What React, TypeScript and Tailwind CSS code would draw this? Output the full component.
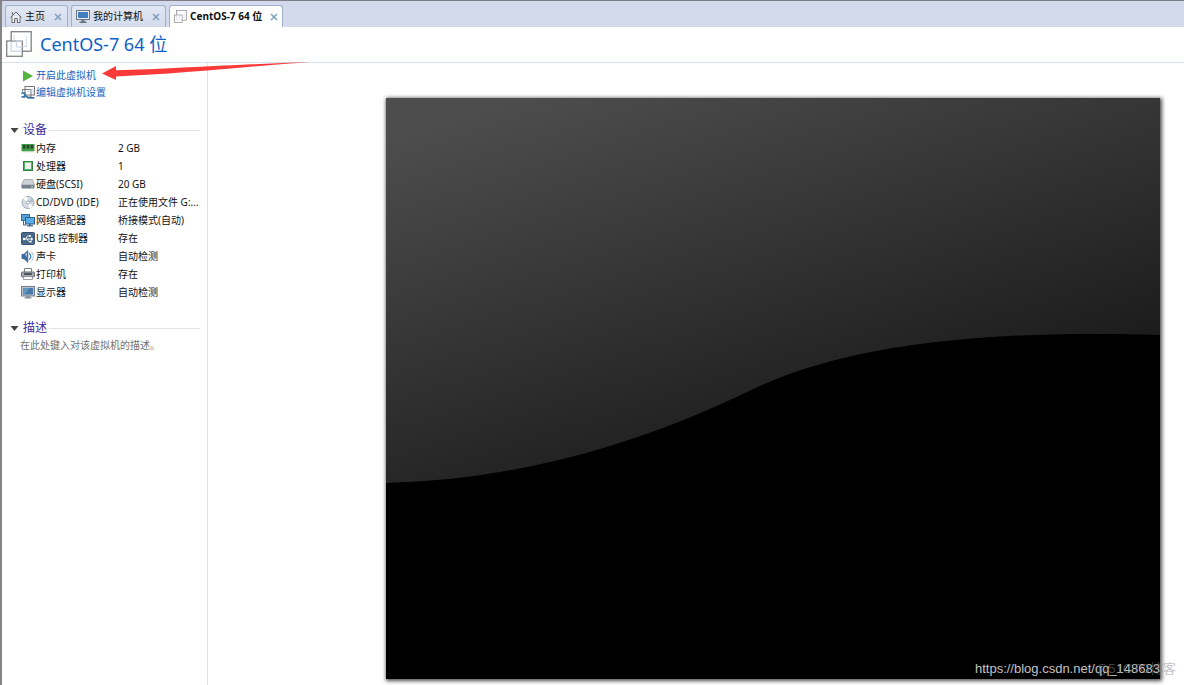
import type { ReactNode } from "react";

type IconProps = { className?: string };

const HomeIcon = () => (
  <svg width="12" height="12" viewBox="0 0 12 12" fill="none" stroke="#666" strokeWidth="1" aria-hidden="true">
    <path d="M0.5 6.5 6 0.9l5.5 5.6" />
    <path d="M2 5.4v6.1h2.6V7.4h2.8v4.1H10V5.4" fill="#f7f9fc" />
    <path d="M2.4 3.8V1.2" />
  </svg>
);

const ComputerIcon = () => (
  <svg width="14" height="13" viewBox="0 0 14 13" aria-hidden="true">
    <rect x="0.5" y="0.5" width="13" height="9" fill="#e8eef5" stroke="#6b7682" />
    <rect x="2" y="2" width="10" height="6" fill="#3f7fc0" />
    <path d="M5.5 10h3v1.5h2V13h-7v-1.5h2z" fill="#6b7682" />
  </svg>
);

const MachineIcon = ({ className }: IconProps) => (
  <svg className={className} viewBox="0 0 26 26" fill="none" stroke="#808080" strokeWidth="1.3" aria-hidden="true">
    <rect x="5.2" y="0.7" width="20" height="19.5" fill="#fff" />
    <rect x="0.7" y="10" width="15.6" height="15.3" fill="#fff" />
    <path d="M5.2 10.6v9.6h10.4M16.3 10H10.5V16" stroke="#c9d4e6" />
    <path d="M10.5 16h5M8 4v6M20.5 5v10.5h-4" stroke="#d9e1ee" />
  </svg>
);

const CloseIcon = () => (
  <svg width="8" height="8" viewBox="0 0 8 8" stroke="#7d9fc0" strokeWidth="1.5" aria-hidden="true">
    <path d="M1 1l6 6M7 1 1 7" />
  </svg>
);

const PlayIcon = () => (
  <svg width="12" height="12" viewBox="0 0 12 12" aria-hidden="true">
    <path d="M1 0.5 11 6 1 11.5z" fill="#53b63b" />
  </svg>
);

const EditIcon = () => (
  <svg width="14" height="13" viewBox="0 0 14 13" fill="none" aria-hidden="true">
    <rect x="4" y="0.5" width="9.5" height="8.5" stroke="#777" fill="#fff" />
    <path d="M1.5 5.5v-2H10V11H7" stroke="#777" />
    <path d="M6.5 5.5h3.5M12 2.5v5" stroke="#c3cfdd" />
    <path d="M0.5 7.2h3.2v3.6H0.5M4 9.2l3.2 2.6h6.3" stroke="#3b78a8" strokeWidth="1.7" />
  </svg>
);

const MemoryIcon = () => (
  <svg width="14" height="12" viewBox="0 0 14 12" aria-hidden="true">
    <rect x="0.5" y="2" width="13" height="7" fill="#3f9a45" />
    <path d="M2 3h2.4v3.5H2zM5.8 3h2.4v3.5H5.8zM9.6 3H12v3.5H9.6z" fill="#27422b" />
    <path d="M1.5 9.5h11" stroke="#7db37f" strokeWidth="1.4" strokeDasharray="1 1" />
  </svg>
);

const CpuIcon = () => (
  <svg width="14" height="12" viewBox="0 0 14 12" aria-hidden="true">
    <rect x="2.5" y="1.5" width="9" height="9" fill="#4fb463" stroke="#2f8442" />
    <rect x="4" y="2.5" width="6" height="6.5" fill="#eef2ee" />
  </svg>
);

const DiskIcon = () => (
  <svg width="14" height="12" viewBox="0 0 14 12" aria-hidden="true">
    <path d="M3 1.5h8.4L13.5 7H0.5z" fill="#cdd2d8" stroke="#9298a0" strokeWidth="0.7" />
    <rect x="0.5" y="7" width="13" height="3.5" rx="0.5" fill="#757e8b" />
    <path d="M10 8.8h2" stroke="#b5e3a4" />
  </svg>
);

const DiscIcon = () => (
  <svg width="14" height="13" viewBox="0 0 14 13" aria-hidden="true">
    <circle cx="7" cy="6.5" r="6" fill="#d4dce5" stroke="#8e9aa8" strokeWidth="0.8" />
    <path d="M7 6.5 2 2.8A6 6 0 0 1 6 .8zM7 6.5l5 3.7a6 6 0 0 1-4 2z" fill="#fff" />
    <path d="M7 6.5 13 6a6 6 0 0 0-2-4z" fill="#adbdce" />
    <circle cx="7" cy="6.5" r="1.6" fill="#fff" stroke="#8e9aa8" strokeWidth="0.8" />
  </svg>
);

const NetworkIcon = () => (
  <svg width="14" height="13" viewBox="0 0 14 13" aria-hidden="true">
    <rect x="0.5" y="0.5" width="8" height="6" fill="#58a2dc" stroke="#356b9b" />
    <path d="M2.5 7v4h3" fill="none" stroke="#3c6d96" />
    <rect x="4.5" y="3.5" width="9" height="6.5" fill="#58ace8" stroke="#2e5f90" />
    <path d="M8 10h2v1.3h2v1.2H6v-1.2h2z" fill="#44678b" />
  </svg>
);

const UsbIcon = () => (
  <svg width="14" height="13" viewBox="0 0 14 13" fill="none" stroke="#fff" aria-hidden="true">
    <rect x="0.5" y="0.5" width="13" height="12" rx="1" fill="#49698a" stroke="#39536f" />
    <path d="M2.5 7H11M4.5 7l2-3h1.7M6 7l2 2.7h1.5" strokeWidth="0.9" />
    <path d="m10 5.3 2.3 1.7L10 8.7z" fill="#fff" stroke="none" />
    <circle cx="3" cy="7" r="1.2" fill="#fff" stroke="none" />
    <path d="M8 3h1.8v1.8H8zM9 8.8h1.6v1.6H9z" fill="#fff" stroke="none" />
  </svg>
);

const SoundIcon = () => (
  <svg width="14" height="13" viewBox="0 0 14 13" fill="none" aria-hidden="true">
    <path d="M1 4.3h2L6.8 0.7v11.6L3 8.7H1z" fill="#3c6da3" stroke="#315a88" strokeWidth="0.8" />
    <path d="M4 4.5 6 2.5v5z" fill="#a9c7e4" />
    <path d="M8.3 3.3c1.6 1.8 1.6 4.6 0 6.4" stroke="#4784bb" strokeWidth="1.3" />
    <path d="M10.3 1.7c2.6 2.8 2.6 6.8 0 9.6" stroke="#a4c1da" />
  </svg>
);

const PrinterIcon = () => (
  <svg width="14" height="12" viewBox="0 0 14 12" aria-hidden="true">
    <path d="M3.5 0.5h7v4h-7z" fill="#fff" stroke="#7b7f88" />
    <rect x="0.5" y="4" width="13" height="5" rx="1" fill="#a6aab4" stroke="#666b75" />
    <path d="M3 6h8" stroke="#34383f" strokeWidth="1.5" />
    <path d="M3 8.5h8l0.7 3H2.3z" fill="#fff" stroke="#858993" strokeWidth="0.8" />
  </svg>
);

const DisplayIcon = () => (
  <svg width="14" height="13" viewBox="0 0 14 13" aria-hidden="true">
    <rect x="0.5" y="0.5" width="13" height="9.5" fill="#b8c2cc" stroke="#72808f" />
    <rect x="2" y="2" width="10" height="6.5" fill="#4778a8" />
    <path d="M2 2h7L4 8.5H2z" fill="#6495bd" />
    <path d="M5 10h4v1.3h1.5v1.2h-7v-1.2H5z" fill="#8792a0" />
  </svg>
);

const tabs = [
  { label: "主页", icon: <HomeIcon />, active: false },
  { label: "我的计算机", icon: <ComputerIcon />, active: false },
  { label: "CentOS-7 64 位", icon: <MachineIcon className="size-[13px]" />, active: true },
];

const devices = [
  { name: "内存", value: "2 GB", icon: <MemoryIcon /> },
  { name: "处理器", value: "1", icon: <CpuIcon /> },
  { name: "硬盘(SCSI)", value: "20 GB", icon: <DiskIcon /> },
  { name: "CD/DVD (IDE)", value: "正在使用文件 G:...", icon: <DiscIcon /> },
  { name: "网络适配器", value: "桥接模式(自动)", icon: <NetworkIcon /> },
  { name: "USB 控制器", value: "存在", icon: <UsbIcon /> },
  { name: "声卡", value: "自动检测", icon: <SoundIcon /> },
  { name: "打印机", value: "存在", icon: <PrinterIcon /> },
  { name: "显示器", value: "自动检测", icon: <DisplayIcon /> },
];

function TabBar() {
  return (
    <nav className="flex h-[26px] items-end gap-[3px] bg-[#d2daec] pt-1 pl-[3px]">
      {tabs.map((tab) => (
        <div
          key={tab.label}
          className={
            tab.active
              ? "flex h-full items-center gap-2 rounded-t-[3px] border border-b-0 border-[#9fb0cc] bg-white px-1"
              : "flex h-full items-center gap-[9px] rounded-t-[3px] border border-b-0 border-[#9fb0cc] bg-linear-to-b from-[#e2e7f3] to-[#d3dbeb] pr-[5px] pl-1"
          }
        >
          <button type="button" className="flex items-center gap-[3px] whitespace-nowrap">
            {tab.icon}
            <span className={tab.active ? "font-bold" : ""}>{tab.label}</span>
          </button>
          <button type="button" aria-label={`关闭 ${tab.label}`}>
            <CloseIcon />
          </button>
        </div>
      ))}
    </nav>
  );
}

function SectionHeading({ children }: { children: ReactNode }) {
  return (
    <h2 className="flex items-center gap-[2px] pr-[7px] pl-2 text-xs leading-[18px] text-[#3c2ba0]">
      <button type="button" className="flex items-center gap-1">
        <svg width="9" height="5" viewBox="0 0 9 5" aria-hidden="true">
          <path d="M0.5 0h8l-4 5z" fill="#444" />
        </svg>
        {children}
      </button>
      <span className="h-px flex-1 bg-[#e4e4e8]" />
    </h2>
  );
}

function Sidebar() {
  return (
    <aside className="relative w-[206px] shrink-0 border-r border-[#d9e4f0] pt-1">
      <div className="flex flex-col items-start pl-[19px] leading-[17px] text-[#1763bd]">
        <a href="#power-on" className="flex items-center gap-[2px] pl-px">
          <PlayIcon />
          开启此虚拟机
        </a>
        <a href="#settings" className="flex items-center gap-px">
          <EditIcon />
          编辑虚拟机设置
        </a>
      </div>
      <section className="pt-5">
        <SectionHeading>设备</SectionHeading>
        <table className="w-full table-fixed border-collapse text-left">
          <tbody>
            {devices.map((device) => (
              <tr key={device.name} className="h-[18px] whitespace-nowrap">
                <th scope="row" className="w-[116px] p-0 pl-[19px] font-normal">
                  <span className="flex items-center gap-px">
                    {device.icon}
                    {device.name}
                  </span>
                </th>
                <td className="p-0">{device.value}</td>
              </tr>
            ))}
          </tbody>
        </table>
      </section>
      <section className="pt-[18px]">
        <SectionHeading>
          <label htmlFor="description">描述</label>
        </SectionHeading>
        <textarea
          id="description"
          rows={2}
          placeholder="在此处键入对该虚拟机的描述。"
          className="block w-full resize-none pr-2 pl-[18px] leading-4 outline-none placeholder:text-[#707070]"
        />
      </section>
      <svg
        className="pointer-events-none absolute -top-px left-[100px] z-10"
        width="210"
        height="18"
        viewBox="0 0 210 18"
        aria-hidden="true"
      >
        <path d="M0 11.5 14 4v4.3C70 7 140 2 209 0 150 4 80 12 14 14.5V18z" fill="#f93a38" />
      </svg>
    </aside>
  );
}

function Preview() {
  return (
    <main className="min-w-0 flex-1 pt-[35px] pr-6 pb-1 pl-[178px]">
      <div className="relative aspect-[774/581] shadow-[1px_1px_4px_1px_rgba(0,0,0,0.7)]">
        <svg className="block size-full" viewBox="0 0 774 581" preserveAspectRatio="none" aria-hidden="true">
          <defs>
            <linearGradient id="screen" gradientUnits="userSpaceOnUse" x1="12" y1="38" x2="141" y2="439">
              <stop offset="0" stopColor="#4d4d4d" />
              <stop offset="0.47" stopColor="#363636" />
              <stop offset="1" stopColor="#1c1c1c" />
            </linearGradient>
          </defs>
          <rect width="774" height="581" fill="url(#screen)" />
          <path d="M0 385C130 382 250 347 359 295C460 245 600 232 774 237V581H0z" fill="#000" />
        </svg>
        <p className="absolute right-0 bottom-[2px] font-['Liberation_Sans',sans-serif] text-[13px] leading-4 whitespace-nowrap text-[#c4c4c4]">
          https://blog.csdn.net/qq_148683
        </p>
        <p className="absolute -right-4 bottom-[2px] font-['Liberation_Sans','Noto_Sans_CJK_SC',sans-serif] text-[13px] leading-4 whitespace-nowrap text-[#888]/50">
          @51CTO博客
        </p>
      </div>
    </main>
  );
}

export default function App() {
  return (
    <div className="flex min-h-screen flex-col overflow-hidden border-t border-l-2 border-t-[#7d7d88] border-l-[#858585] bg-white font-['Noto_Sans','Noto_Sans_CJK_SC',sans-serif] text-[10px] text-[#111]">
      <TabBar />
      <header className="flex h-9 items-center gap-2 border-b border-[#d5e2f0] pb-[2px] pl-1">
        <MachineIcon className="size-[26px]" />
        <h1 className="text-lg leading-6 text-[#0f5fc8]">CentOS-7 64 位</h1>
      </header>
      <div className="flex flex-1">
        <Sidebar />
        <Preview />
      </div>
    </div>
  );
}
